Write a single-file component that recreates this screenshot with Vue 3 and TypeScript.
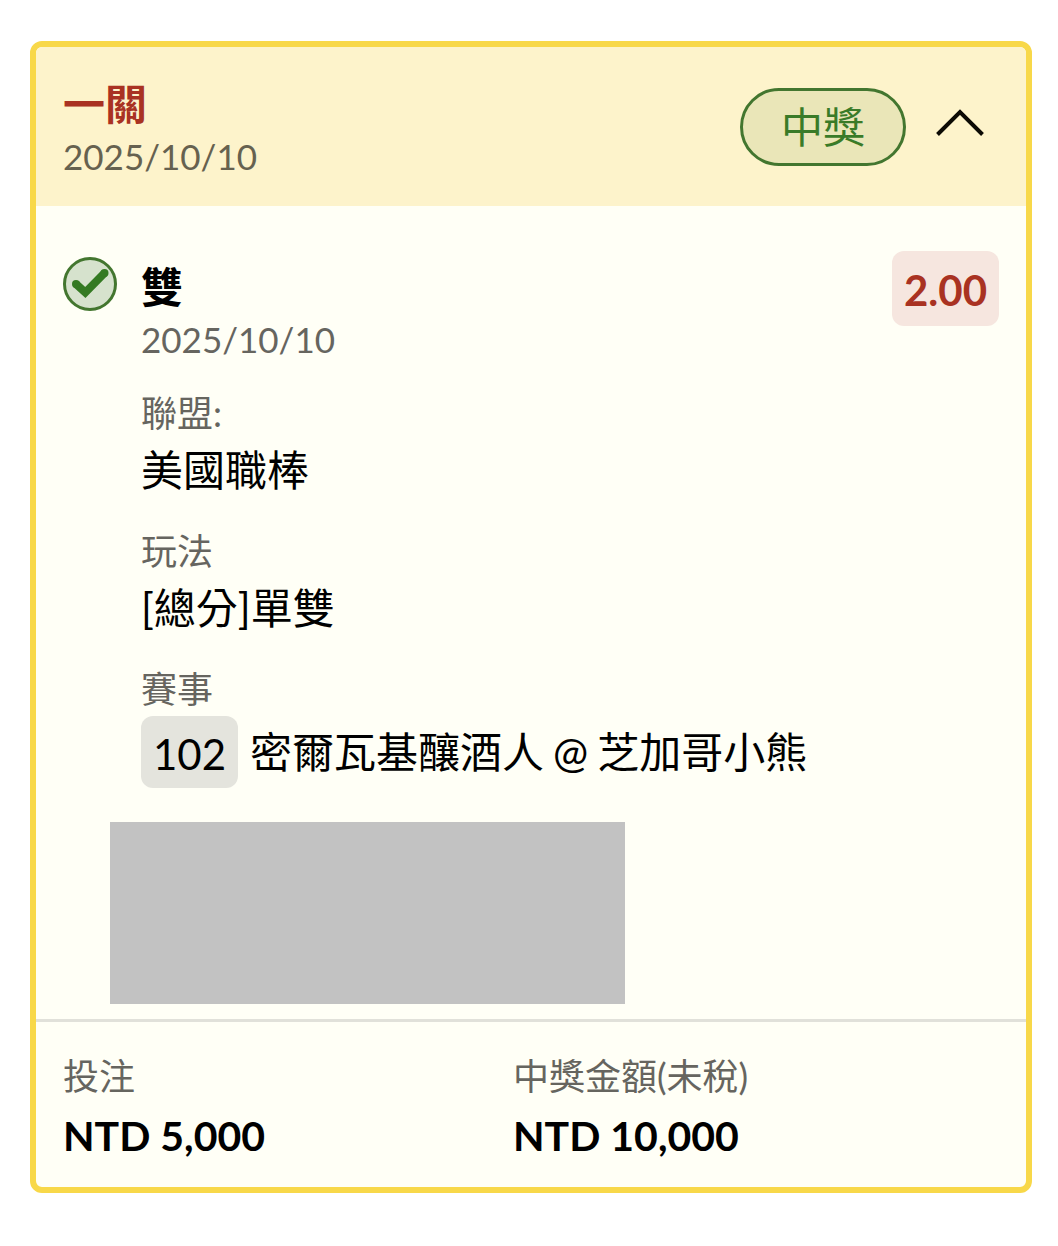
<script setup lang="ts">
import { ref } from 'vue'

interface Total {
  label: string
  value: string
}

const expanded = ref<boolean>(true)

const totals: Total[] = [
  { label: '投注', value: 'NTD 5,000' },
  { label: '中獎金額(未稅)', value: 'NTD 10,000' },
]
</script>

<template>
  <main class="page">
    <article class="ticket">
      <header class="ticket-head">
        <div>
          <h1 class="ticket-title">一關</h1>
          <p class="date">2025/10/10</p>
        </div>
        <div class="head-side">
          <span class="status">中獎</span>
          <button
            class="toggle"
            type="button"
            aria-label="收合"
            :aria-expanded="expanded"
            @click="expanded = !expanded"
          >
            <svg viewBox="0 0 48 30" width="48" height="30" fill="none" aria-hidden="true">
              <path d="M1.500 26.500 24 4l22.500 22.500" stroke="#0c0a04" stroke-width="4" />
            </svg>
          </button>
        </div>
      </header>

      <section v-if="expanded" class="bet">
        <div class="bet-row">
          <svg class="check" viewBox="0 0 54 54" width="54" height="54" fill="none" aria-hidden="true">
            <circle cx="27" cy="27" r="25.500" fill="#d6e2cd" stroke="#43762f" stroke-width="3" />
            <path d="M13 27 22.300 35.500 41.500 16" stroke="#347a22" stroke-width="8" />
            <circle cx="13" cy="27" r="4" fill="#347a22" />
            <circle cx="41.500" cy="16" r="4" fill="#347a22" />
          </svg>
          <div class="bet-main">
            <h2 class="pick">雙</h2>
            <p class="date">2025/10/10</p>
            <dl class="fields">
              <div>
                <dt>聯盟:</dt>
                <dd>美國職棒</dd>
              </div>
              <div>
                <dt>玩法</dt>
                <dd>[總分]單雙</dd>
              </div>
              <div>
                <dt>賽事</dt>
                <dd class="match">
                  <span class="code">102</span>
                  <span class="teams">
                    <span>密爾瓦基釀酒人</span>
                    <span>@</span>
                    <span>芝加哥小熊</span>
                  </span>
                </dd>
              </div>
            </dl>
          </div>
          <strong class="odds">2.00</strong>
        </div>
        <div class="redacted"></div>
      </section>

      <footer class="totals">
        <dl v-for="t in totals" :key="t.label">
          <dt>{{ t.label }}</dt>
          <dd class="amount">{{ t.value }}</dd>
        </dl>
      </footer>
    </article>
  </main>
</template>

<style>
body {
  margin: 0;
  background: #fff;
}
</style>

<style scoped>
.page {
  padding: 41px 26px 52px 30px;
  font-family: Lato, "Noto Sans CJK TC", sans-serif;
  font-size: 42px;
  line-height: 60px;
  color: #000;
}

h1, h2, p, dl, dd {
  margin: 0;
  font-size: 42px;
}

.ticket {
  border: 6px solid #f8d849;
  border-radius: 12px;
  background: #fffff6;
  overflow: hidden;
}

.ticket-head {
  display: flex;
  justify-content: space-between;
  align-items: flex-start;
  padding: 27px 27px 28px;
  background: #fdf3cb;
}

.ticket-title {
  font-weight: 700;
  color: #a93222;
}

.date {
  font-size: 35px;
  line-height: 44px;
  color: #66655f;
}

dt {
  font-size: 36px;
  line-height: 54px;
  color: #66655f;
}

.ticket-head .date {
  color: #66614f;
}

.head-side {
  display: flex;
  align-items: center;
  gap: 18px;
  padding-top: 14px;
}

.status {
  padding: 0 38px;
  border: 3px solid #43762f;
  border-radius: 39px;
  line-height: 72px;
  color: #3a7b28;
  background: #eae6b8;
}

.toggle {
  display: flex;
  padding: 12px;
  margin-bottom: 8px;
  margin-right: 3px;
  border: 0;
  background: none;
  cursor: pointer;
}

.bet {
  padding: 45px 27px 15px;
}

.bet-row {
  display: flex;
  align-items: flex-start;
}

.check {
  flex: none;
  margin: 6px 24px 0 0;
}

.bet-main {
  flex: 1;
}

.pick {
  padding-top: 6px;
  font-weight: 700;
}

.odds {
  padding: 4px 12px 0;
  border-radius: 12px;
  line-height: 71px;
  color: #a93222;
  background: #f6e6df;
}

.fields {
  display: flex;
  flex-direction: column;
  gap: 24px;
  margin-top: 25px;
}

.match {
  display: flex;
  align-items: center;
  gap: 12px;
}

.teams {
  display: flex;
  gap: 9px;
}

.code {
  padding: 4px 12px 0;
  border-radius: 12px;
  line-height: 68px;
  background: #e4e4dd;
}

.redacted {
  width: 55%;
  height: 182px;
  margin: 34px 0 0 47px;
  background: #c2c2c2;
}

.totals {
  display: grid;
  grid-template-columns: 25fr 27fr;
  padding: 27px 27px 21px;
  border-top: 3px solid #e1e1da;
}

.amount {
  padding-top: 3px;
  font-size: 41px;
  font-weight: 700;
}
</style>
